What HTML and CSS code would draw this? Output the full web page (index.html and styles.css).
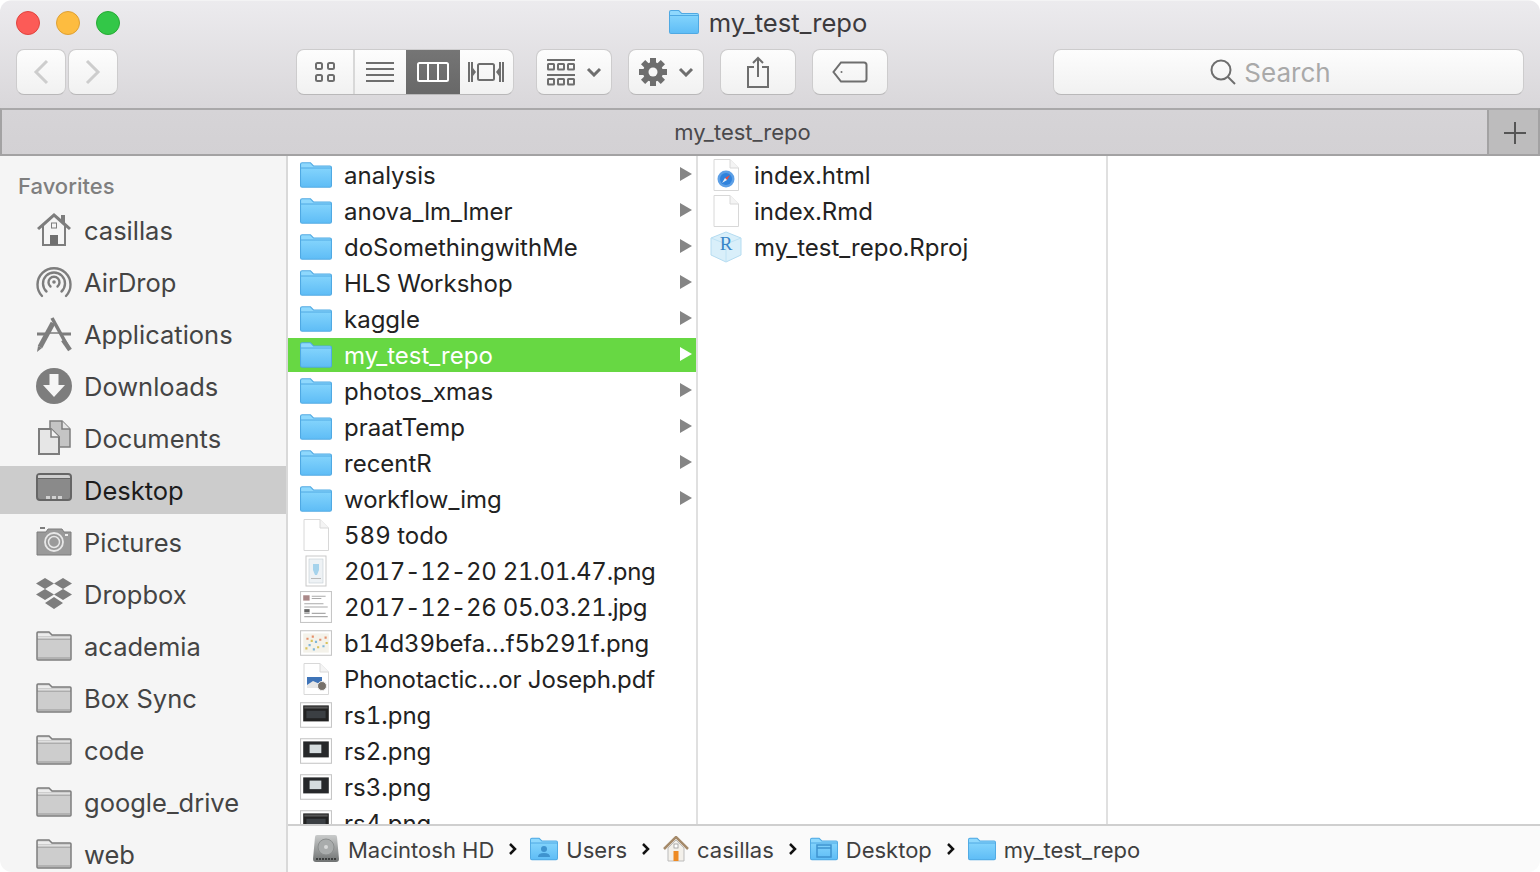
FILE: index.html
```html
<!DOCTYPE html>
<html lang="en">
<head>
	<meta charset="utf-8">
	<title>my_test_repo</title>
	<link rel="stylesheet" href="styles.css">
</head>
<body>
	<svg class="sprite" xmlns="http://www.w3.org/2000/svg">
		<defs>
			<linearGradient id="blue" x1="0" y1="0" x2="0" y2="1">
				<stop offset="0" stop-color="#82d3fc"/>
				<stop offset="1" stop-color="#5fbdf6"/>
			</linearGradient>
			<linearGradient id="disk" x1="0" y1="0" x2="0" y2="1">
				<stop offset="0" stop-color="#c9cbcb"/>
				<stop offset="1" stop-color="#6f7272"/>
			</linearGradient>
		</defs>
		<symbol id="i-folder" viewBox="0 0 30 24">
			<path d="M0 2Q0 0 2 0H10L13 3H28Q30 3 30 5V22Q30 24 28 24H2Q0 24 0 22Z" fill="#4fa9e3"/>
			<path d="M1 6H29V22Q29 23 28 23H2Q1 23 1 22Z" fill="url(#blue)"/>
			<path d="M1 5V2Q1 1 2 1H9.500L12.500 4H28Q29 4 29 5Z" fill="#8ed8fd"/>
		</symbol>
		<symbol id="i-page" viewBox="0 0 26 32">
			<path d="M1 .5H17L25.500 9V31.500H1Z" fill="#fff" stroke="#d8d8d8"/>
			<path d="M17 .5V9H25.500" fill="#f4f4f4" stroke="#d8d8d8"/>
		</symbol>
		<symbol id="i-safari" viewBox="0 0 26 32">
			<use href="#i-page" width="26" height="32"/>
			<circle cx="13" cy="20" r="8.500" fill="#5c9fe6"/>
			<circle cx="13" cy="20" r="6" fill="#2f82dc"/>
			<path d="M17 16L14 21L12 19Z" fill="#ef4b3f"/>
			<path d="M9 24L12 19L14 21Z" fill="#e8eef5"/>
		</symbol>
		<symbol id="i-shot-tall" viewBox="0 0 30 32">
			<rect x="5" y="1" width="20" height="30" fill="#fff" stroke="#c9c9c9"/>
			<rect x="8" y="4" width="14" height="24" fill="#eef2f5" stroke="#c4ccd2" stroke-width=".600"/>
			<path d="M12 9H18V15L16 20H14L12 15Z" fill="#a6d3ec"/>
			<path d="M10 23H20V24H10Z" fill="#b9b9b9"/>
		</symbol>
		<symbol id="i-shot-doc" viewBox="0 0 30 30">
			<rect x=".5" y=".5" width="29" height="29" fill="#fff" stroke="#c6c6c6"/>
			<path d="M3 4H9V9H3Z" fill="#a88"/>
			<path d="M11 5H24M11 7H20M4 12H22M4 15H26M4 21H9M11 21H24M4 24H26" stroke="#aaa"/>
			<path d="M4 17H9V20H4Z" fill="#666"/>
		</symbol>
		<symbol id="i-shot-map" viewBox="0 0 30 24">
			<rect x=".5" y=".5" width="29" height="23" fill="#fff" stroke="#c6c6c6"/>
			<rect x="3" y="3" width="24" height="18" fill="#f4f2ea"/>
			<path d="M6 7h2v2H6zM11 5h2v2h-2zM18 8h2v2h-2zM23 6h2v2h-2z" fill="#e58f6a"/>
			<path d="M8 13h2v2H8zM14 10h2v2h-2zM21 14h2v2h-2zM12 17h2v2h-2z" fill="#7fb7d9"/>
			<path d="M5 16h2v2H5zM16 15h2v2h-2zM24 11h2v2h-2zM10 9h2v2h-2z" fill="#d9c35c"/>
		</symbol>
		<symbol id="i-shot-pdf" viewBox="0 0 26 32">
			<use href="#i-page" width="26" height="32"/>
			<rect x="4" y="14" width="15" height="11" fill="#3f74b8"/>
			<path d="M4 22L10 18L19 22V25H4Z" fill="#e6e6e6"/>
			<circle cx="19" cy="23" r="4.500" fill="#77716a" stroke="#eee"/>
		</symbol>
		<symbol id="i-shot-dark" viewBox="0 0 30 24">
			<rect x=".5" y=".5" width="29" height="23" fill="#fff" stroke="#c6c6c6"/>
			<rect x="3" y="3" width="24" height="15" fill="#222"/>
			<rect x="4" y="4" width="22" height="2" fill="#555"/>
			<rect x="6" y="8" width="18" height="7" fill="#3b3f43"/>
		</symbol>
		<symbol id="i-shot-box" viewBox="0 0 30 24">
			<rect x=".5" y=".5" width="29" height="23" fill="#fff" stroke="#c6c6c6"/>
			<rect x="3" y="3" width="24" height="15" fill="#26282a"/>
			<rect x="9" y="6" width="11" height="8" fill="#d5dcde"/>
		</symbol>

		<symbol id="s-home" viewBox="0 0 36 36">
			<path d="M18 1L1 16L3 18L6 15.500V34H30V15.500L33 18L35 16L29 10.500V3H25V7Z" fill="#7d7d7d"/>
			<path d="M18 5L8 14V32H28V14Z" fill="#f5f5f5"/>
			<rect x="15.500" y="11" width="5" height="5" fill="none" stroke="#7d7d7d"/>
			<rect x="14" y="23" width="8" height="10" fill="#6f6f6f"/>
		</symbol>
		<symbol id="s-airdrop" viewBox="0 0 36 36">
			<g fill="none" stroke="#7d7d7d" stroke-width="2.400" stroke-linecap="round">
				<path d="M6 32A16.500 16.500 0 1 1 30 32"/>
				<path d="M10.500 27.500A11 11 0 1 1 25.500 27.500"/>
				<path d="M14.500 22.500A5.500 5.500 0 1 1 21.500 22.500"/>
			</g>
			<circle cx="18" cy="18" r="1.800" fill="#7d7d7d"/>
		</symbol>
		<symbol id="s-apps" viewBox="0 0 36 36">
			<g fill="none" stroke="#7d7d7d">
				<path d="M16 2L32 31" stroke-width="3.500"/>
				<path d="M1 18H9M25 18H35" stroke-width="3"/>
				<path d="M11 17H24" stroke-width="1.500"/>
				<path d="M17 7L4 31" stroke-width="5"/>
				<path d="M27 24L34 34" stroke-width="4.500"/>
			</g>
			<path d="M1 36L2 30L6 32Z" fill="#7d7d7d"/>
		</symbol>
		<symbol id="s-downloads" viewBox="0 0 36 36">
			<circle cx="18" cy="18" r="18" fill="#7d7d7d"/>
			<path d="M13.500 6H22.500V17H29L18 29L7 17H13.500Z" fill="#f5f5f5"/>
		</symbol>
		<symbol id="s-docs" viewBox="0 0 36 36">
			<path d="M14 1H26L34 9V27H14Z" fill="#c4c4c4" stroke="#7d7d7d" stroke-width="1.500"/>
			<path d="M26 1V9H34" fill="#e6e6e6" stroke="#7d7d7d" stroke-width="1.500"/>
			<path d="M3 9H15L23 17V34H3Z" fill="#e6e6e6" stroke="#7d7d7d" stroke-width="2"/>
			<path d="M15 9V17H23" fill="#f2f2f2" stroke="#7d7d7d" stroke-width="1.500"/>
		</symbol>
		<symbol id="s-desktop" viewBox="0 0 36 36">
			<rect x="1" y="2" width="34" height="26" rx="3" fill="#8a8a8a" stroke="#666" stroke-width="2"/>
			<path d="M2 3.500Q2 3 4 3H32Q34 3 34 5V6H2Z" fill="#cfcfcf"/>
			<path d="M2 6H34V7H2Z" fill="#666"/>
			<path d="M10 24h4v3h-4zM16 24h4v3h-4zM22 24h4v3h-4z" fill="#d0d0d0"/>
		</symbol>
		<symbol id="s-pictures" viewBox="0 0 36 36">
			<path d="M1 8H10L12 5H26L28 8H35V31H1Z" fill="#9a9a9a" stroke="#7d7d7d"/>
			<path d="M4 3H9V5H4Z" fill="#7d7d7d"/>
			<circle cx="18" cy="18" r="9" fill="none" stroke="#e8e8e8" stroke-width="1.800"/>
			<circle cx="18" cy="18" r="5.500" fill="none" stroke="#e8e8e8" stroke-width="1.500"/>
			<rect x="29" y="10" width="3" height="2" fill="#eee"/>
		</symbol>
		<symbol id="s-dropbox" viewBox="0 0 36 36">
			<path d="M9 2L18 7.500L9 13L0 7.500Z M27 2L36 7.500L27 13L18 7.500Z M9 13L18 18.500L9 24L0 18.500Z M27 13L36 18.500L27 24L18 18.500Z M18 21L27 27L18 33L9 27Z" fill="#7d7d7d"/>
		</symbol>
		<symbol id="s-folder" viewBox="0 0 36 30">
			<path d="M1 2Q1 1 2 1H13L16 4H34Q35 4 35 5V28Q35 29 34 29H2Q1 29 1 28Z" fill="#cdcdcd" stroke="#7d7d7d" stroke-width="1.500"/>
			<path d="M1.500 8H34.500" stroke="#7d7d7d" stroke-width="1.500"/>
			<path d="M2 5V2.500H13L15.500 5Z" fill="#ececec"/>
			<path d="M2 8.500H34V6H2Z" fill="#ececec" opacity=".6"/>
			<path d="M2 26H34V28H2Z" fill="#b2b2b2"/>
		</symbol>
	</svg>

	<div class="window">
		<header class="toolbar">
			<div class="titlebar">
				<div class="lights">
					<span class="light red"></span>
					<span class="light amber"></span>
					<span class="light green"></span>
				</div>
				<div class="title">
					<svg class="title-icon"><use href="#i-folder"/></svg>
					<span>my_test_repo</span>
				</div>
			</div>
			<div class="tools">
				<div class="nav">
					<div class="btn nav-btn">
						<svg width="18" height="26" viewBox="0 0 18 26"><path d="M15 2L4 13L15 24" class="chev-line"/></svg>
					</div>
					<div class="btn nav-btn">
						<svg width="18" height="26" viewBox="0 0 18 26"><path d="M3 2L14 13L3 24" class="chev-line"/></svg>
					</div>
				</div>

				<div class="btn views">
					<div class="view">
						<svg width="22" height="22" viewBox="0 0 22 22" class="ic"><rect x="2" y="2" width="6" height="6" rx="1.500"/><rect x="14" y="2" width="6" height="6" rx="1.500"/><rect x="2" y="14" width="6" height="6" rx="1.500"/><rect x="14" y="14" width="6" height="6" rx="1.500"/></svg>
					</div>
					<div class="view view-mid">
						<svg width="30" height="22" viewBox="0 0 30 22" class="ic"><path d="M1 2H29M1 8H29M1 14H29M1 20H29"/></svg>
					</div>
					<div class="view view-on">
						<svg width="32" height="20" viewBox="0 0 32 20" class="ic-on"><rect x="1" y="1" width="30" height="18" rx="1.500"/><path d="M11 1V19M21 1V19"/></svg>
					</div>
					<div class="view view-end">
						<svg width="36" height="22" viewBox="0 0 36 22" class="ic"><path d="M1 1V21M4 1V21M32 1V21M35 1V21"/><rect x="10" y="3" width="16" height="16" rx="1.500"/><path d="M5 7L8 11L5 15ZM31 7L28 11L31 15Z" class="ic-fill"/></svg>
					</div>
				</div>

				<div class="btn tool">
					<svg width="28" height="28" viewBox="0 0 28 28" class="ic"><path d="M0 2H28M0 17H28"/><rect x="1" y="6" width="6" height="5.500" rx=".5"/><rect x="11" y="6" width="6" height="5.500" rx=".5"/><rect x="21" y="6" width="6" height="5.500" rx=".5"/><rect x="1" y="21" width="6" height="5.500" rx=".5"/><rect x="11" y="21" width="6" height="5.500" rx=".5"/><rect x="21" y="21" width="6" height="5.500" rx=".5"/></svg>
					<svg width="16" height="10" viewBox="0 0 16 10" class="ic-chev"><path d="M2 2L8 8L14 2"/></svg>
				</div>
				<div class="btn tool">
					<svg width="28" height="28" viewBox="0 0 28 28" class="gear">
						<circle cx="14" cy="14" r="10"/>
						<rect x="11" y="0" width="6" height="28"/>
						<rect x="11" y="0" width="6" height="28" transform="rotate(45 14 14)"/>
						<rect x="11" y="0" width="6" height="28" transform="rotate(90 14 14)"/>
						<rect x="11" y="0" width="6" height="28" transform="rotate(135 14 14)"/>
						<circle cx="14" cy="14" r="4.500" class="gear-hole"/>
					</svg>
					<svg width="16" height="10" viewBox="0 0 16 10" class="ic-chev"><path d="M2 2L8 8L14 2"/></svg>
				</div>
				<div class="btn tool">
					<svg width="24" height="32" viewBox="0 0 24 32" class="ic"><path d="M8 11H2V31H22V11H16M12 21V2M7 7L12 2L17 7"/></svg>
				</div>
				<div class="btn tool">
					<svg width="36" height="22" viewBox="0 0 36 22" class="ic"><path d="M9 1.500H32Q34.500 1.500 34.500 4V18Q34.500 20.500 32 20.500H9L1.500 11Z"/><circle cx="9.500" cy="11" r="1" class="ic-fill"/></svg>
				</div>

				<div class="btn search">
					<svg width="26" height="26" viewBox="0 0 26 26" class="ic"><circle cx="11" cy="11" r="9.500"/><path d="M18 18L25 25"/></svg>
					<span>Search</span>
				</div>
			</div>
		</header>

		<div class="tabbar">
			<div class="tab-name">my_test_repo</div>
			<div class="tab-add">
				<svg width="22" height="22" viewBox="0 0 22 22"><path d="M11 0V22M0 11H22"/></svg>
			</div>
		</div>

		<div class="main">
			<aside class="sidebar">
				<div class="side-head">Favorites</div>
				<div class="side-row"><svg class="side-icon"><use href="#s-home"/></svg>casillas</div>
				<div class="side-row"><svg class="side-icon"><use href="#s-airdrop"/></svg>AirDrop</div>
				<div class="side-row"><svg class="side-icon"><use href="#s-apps"/></svg>Applications</div>
				<div class="side-row"><svg class="side-icon"><use href="#s-downloads"/></svg>Downloads</div>
				<div class="side-row"><svg class="side-icon"><use href="#s-docs"/></svg>Documents</div>
				<div class="side-row side-on"><svg class="side-icon"><use href="#s-desktop"/></svg>Desktop</div>
				<div class="side-row"><svg class="side-icon"><use href="#s-pictures"/></svg>Pictures</div>
				<div class="side-row"><svg class="side-icon"><use href="#s-dropbox"/></svg>Dropbox</div>
				<div class="side-row"><svg class="side-icon"><use href="#s-folder"/></svg>academia</div>
				<div class="side-row"><svg class="side-icon"><use href="#s-folder"/></svg>Box Sync</div>
				<div class="side-row"><svg class="side-icon"><use href="#s-folder"/></svg>code</div>
				<div class="side-row"><svg class="side-icon"><use href="#s-folder"/></svg>google_drive</div>
				<div class="side-row"><svg class="side-icon"><use href="#s-folder"/></svg>web</div>
			</aside>

			<div class="browser">
				<div class="columns">
					<div class="col">
						<div class="row"><svg class="file folder"><use href="#i-folder"/></svg><span class="name">analysis</span><i class="arrow"></i></div>
						<div class="row"><svg class="file folder"><use href="#i-folder"/></svg><span class="name">anova_lm_lmer</span><i class="arrow"></i></div>
						<div class="row"><svg class="file folder"><use href="#i-folder"/></svg><span class="name">doSomethingwithMe</span><i class="arrow"></i></div>
						<div class="row"><svg class="file folder"><use href="#i-folder"/></svg><span class="name">HLS Workshop</span><i class="arrow"></i></div>
						<div class="row"><svg class="file folder"><use href="#i-folder"/></svg><span class="name">kaggle</span><i class="arrow"></i></div>
						<div class="row row-on"><svg class="file folder"><use href="#i-folder"/></svg><span class="name">my_test_repo</span><i class="arrow"></i></div>
						<div class="row"><svg class="file folder"><use href="#i-folder"/></svg><span class="name">photos_xmas</span><i class="arrow"></i></div>
						<div class="row"><svg class="file folder"><use href="#i-folder"/></svg><span class="name">praatTemp</span><i class="arrow"></i></div>
						<div class="row"><svg class="file folder"><use href="#i-folder"/></svg><span class="name">recentR</span><i class="arrow"></i></div>
						<div class="row"><svg class="file folder"><use href="#i-folder"/></svg><span class="name">workflow_img</span><i class="arrow"></i></div>
						<div class="row"><svg class="file"><use href="#i-page"/></svg><span class="name">589 todo</span></div>
						<div class="row"><svg class="file"><use href="#i-shot-tall"/></svg><span class="name num">2017-12-20 21.01.47.png</span></div>
						<div class="row"><svg class="file"><use href="#i-shot-doc"/></svg><span class="name num">2017-12-26 05.03.21.jpg</span></div>
						<div class="row"><svg class="file"><use href="#i-shot-map"/></svg><span class="name tight">b14d39befa…f5b291f.png</span></div>
						<div class="row"><svg class="file"><use href="#i-shot-pdf"/></svg><span class="name tight">Phonotactic…or Joseph.pdf</span></div>
						<div class="row"><svg class="file"><use href="#i-shot-dark"/></svg><span class="name">rs1.png</span></div>
						<div class="row"><svg class="file"><use href="#i-shot-box"/></svg><span class="name">rs2.png</span></div>
						<div class="row"><svg class="file"><use href="#i-shot-box"/></svg><span class="name">rs3.png</span></div>
						<div class="row"><svg class="file"><use href="#i-shot-dark"/></svg><span class="name">rs4.png</span></div>
					</div>
					<div class="col">
						<div class="row"><svg class="file"><use href="#i-safari"/></svg><span class="name">index.html</span></div>
						<div class="row"><svg class="file"><use href="#i-page"/></svg><span class="name">index.Rmd</span></div>
						<div class="row">
							<svg class="file" viewBox="0 0 32 30">
								<path d="M16 0L31 6V23L16 30L1 23V6Z" fill="#d9effa" stroke="#b5dcf1"/>
								<path d="M1 6L16 12L31 6M16 12V30" fill="none" stroke="#bfe2f4"/>
								<text x="16" y="18" class="r-letter">R</text>
							</svg>
							<span class="name">my_test_repo.Rproj</span>
						</div>
					</div>
					<div class="col col-last"></div>
				</div>

				<div class="pathbar">
					<svg class="crumb-icon" width="28" height="28" viewBox="0 0 28 28">
						<path d="M3 2Q3 0 5 0H23Q25 0 25 2L27 24Q27 27 24 27H4Q1 27 1 24Z" fill="url(#disk)"/>
						<circle cx="14" cy="12" r="8" fill="#a9acac" stroke="#8b8e8e"/>
						<circle cx="14" cy="12" r="2" fill="#d7d9d9"/>
						<path d="M4 24H24" stroke="#3c3e3e" stroke-width="2" stroke-dasharray="2 1"/>
					</svg>
					<span class="crumb">Macintosh HD</span>
					<svg class="crumb-sep" width="10" height="14" viewBox="0 0 10 14"><path d="M2 2L7 7L2 12"/></svg>
					<svg class="crumb-icon" width="28" height="24" viewBox="0 0 28 24">
						<use href="#i-folder" width="28" height="24"/>
						<circle cx="14" cy="12" r="3" fill="#3e93cf"/>
						<path d="M8 20Q8 16 14 16Q20 16 20 20Z" fill="#3e93cf"/>
					</svg>
					<span class="crumb">Users</span>
					<svg class="crumb-sep" width="10" height="14" viewBox="0 0 10 14"><path d="M2 2L7 7L2 12"/></svg>
					<svg class="crumb-icon crumb-home" width="26" height="26" viewBox="0 0 26 26">
						<path d="M5 12L13 4L21 12V25H5Z" fill="#f3f0ea" stroke="#bbb"/>
						<path d="M1 13L13 1L25 13" fill="none" stroke="#a58a6a" stroke-width="2.500"/>
						<rect x="10.500" y="15" width="5" height="10" fill="#ee8a22"/>
						<rect x="11" y="8" width="4" height="4" fill="#fff" stroke="#999" stroke-width=".800"/>
					</svg>
					<span class="crumb">casillas</span>
					<svg class="crumb-sep" width="10" height="14" viewBox="0 0 10 14"><path d="M2 2L7 7L2 12"/></svg>
					<svg class="crumb-icon" width="28" height="24" viewBox="0 0 28 24">
						<use href="#i-folder" width="28" height="24"/>
						<rect x="7" y="8" width="14" height="12" fill="none" stroke="#3e93cf" stroke-width="1.500"/>
						<path d="M7 11H21" stroke="#3e93cf" stroke-width="1.500"/>
					</svg>
					<span class="crumb">Desktop</span>
					<svg class="crumb-sep" width="10" height="14" viewBox="0 0 10 14"><path d="M2 2L7 7L2 12"/></svg>
					<svg class="crumb-icon" width="28" height="24"><use href="#i-folder"/></svg>
					<span class="crumb">my_test_repo</span>
				</div>
			</div>
		</div>
	</div>
</body>
</html>
```

FILE: styles.css
```css
* {padding: 0; margin: 0; box-sizing: border-box;}
html, body {
	width: 1540px;
	height: 872px;
	overflow: hidden;
	background: #fff;
}
body {
	font-family: "Inter", "Liberation Sans", sans-serif;
	font-size: 24px;
	color: #222;
}
.sprite {
	position: absolute;
	width: 0;
	height: 0;
}
.r-letter {
	font-family: "Liberation Serif", serif;
	font-size: 19px;
	fill: #3a86c8;
	text-anchor: middle;
}

.window {
	width: 1540px;
	height: 872px;
	display: flex;
	flex-direction: column;
	border-radius: 12px;
	overflow: hidden;
}

/* toolbar */
.toolbar {
	height: 108px;
	flex: none;
	background: linear-gradient(#ecebee, #d9d7da);
	border-top: 1px solid #f3f3f4;
}
.titlebar {
	height: 44px;
	display: grid;
	grid-template-columns: 1fr auto 1fr;
	align-items: center;
	padding: 0 16px;
}
.lights {
	display: flex;
	gap: 16px;
}
.light {
	width: 24px;
	height: 24px;
	border-radius: 50%;
	border: 1px solid;
}
.red {background: #fc5b57; border-color: #e0443e;}
.amber {background: #fdbc40; border-color: #dea034;}
.green {background: #33c748; border-color: #27aa35;}
.title {
	grid-column: 2;
	display: flex;
	align-items: center;
	gap: 10px;
	color: #3c3a3d;
	font-size: 25.6px;
	margin: 0 4px 2px 0;
}
.title-icon {
	width: 30px;
	height: 24px;
}
.tools {
	height: 46px;
	margin-top: 4px;
	padding: 0 16px;
	display: flex;
	gap: 16px;
}
.btn {
	height: 46px;
	display: flex;
	align-items: center;
	justify-content: center;
	background: linear-gradient(#fdfdfd, #f1f1f1);
	border: 1px solid #cdcccd;
	border-bottom-color: #b9b8b9;
	border-radius: 8px;
}
.nav {
	display: flex;
	gap: 2px;
	margin-right: 162px;
}
.nav-btn {
	width: 50px;
}
.chev-line {
	fill: none;
	stroke: #cdcdcd;
	stroke-width: 3;
}
.views {
	width: 218px;
	margin-right: 6px;
	display: grid;
	grid-template-columns: 56px 53px 54px 1fr;
	overflow: hidden;
}
.view {
	height: 100%;
	display: flex;
	align-items: center;
	justify-content: center;
}
.view-mid {
	border-left: 2px solid #d8d8d8;
	padding-right: 2px;
}
.view-end {
	padding-right: 2px;
}
.view-on {
	background: linear-gradient(#757575, #686868);
}
.ic, .ic-chev {
	fill: none;
	stroke: #6e6e6e;
	stroke-width: 2;
}
.ic-chev {
	stroke-width: 3;
}
.ic-fill {
	fill: #6e6e6e;
	stroke: none;
}
.ic-on {
	fill: none;
	stroke: #fff;
	stroke-width: 2;
}
.tool {
	width: 76px;
	gap: 11px;
}
.gear {
	fill: #6e6e6e;
}
.gear-hole {
	fill: #f7f7f7;
}
.search {
	width: 471px;
	margin-left: auto;
	padding-right: 36px;
	gap: 8px;
	color: #a9a9a9;
	font-size: 26px;
}

/* tab row */
.tabbar {
	height: 48px;
	flex: none;
	display: flex;
	background: linear-gradient(#d6d4d7, #d3d1d4);
	border-top: 2px solid #a9a8a9;
	border-bottom: 2px solid #a3a2a3;
	border-left: 2px solid #a3a2a3;
	border-right: 2px solid #a3a2a3;
}
.tab-name {
	flex: 1;
	display: flex;
	align-items: center;
	justify-content: center;
	padding-right: 4px;
	font-size: 22px;
	color: #4a494b;
}
.tab-add {
	width: 51px;
	display: flex;
	align-items: center;
	justify-content: center;
	padding: 2px 0 0 2px;
	background: #bdbcbd;
	border-left: 2px solid #a3a2a3;
}
.tab-add path {
	stroke: #555;
	stroke-width: 2;
}

/* body */
.main {
	flex: 1;
	min-height: 0;
	display: flex;
}
.sidebar {
	width: 288px;
	flex: none;
	background: #f5f5f5;
	border-right: 2px solid #d9d9d9;
	overflow: hidden;
	color: #444;
	font-size: 25.5px;
}
.side-head {
	height: 50px;
	padding: 17px 0 0 18px;
	font-size: 22px;
	font-weight: 500;
	line-height: 26px;
	color: #7f7f7f;
}
.side-row {
	height: 48px;
	margin-bottom: 4px;
	padding-left: 36px;
	display: flex;
	align-items: center;
	gap: 12px;
}
.side-on {
	background: #cccccc;
	color: #1c1c1c;
}
.side-icon {
	width: 36px;
	height: 36px;
	flex: none;
}

.browser {
	flex: 1;
	min-width: 0;
	display: flex;
	flex-direction: column;
}
.columns {
	flex: 1;
	min-height: 0;
	display: flex;
}
.col {
	width: 410px;
	flex: none;
	padding-top: 2px;
	border-right: 2px solid #e0e0e0;
	overflow: hidden;
}
.col-last {
	flex: 1;
	border-right: 0;
}
.row {
	height: 34px;
	margin-bottom: 2px;
	display: flex;
	align-items: center;
	padding: 0 4px 0 12px;
}
.row-on {
	background: #67d843;
	color: #fff;
}
.file {
	width: 32px;
	height: 32px;
	flex: none;
}
.name {
	flex: 1;
	margin-left: 12px;
	white-space: nowrap;
	font-variant-numeric: tabular-nums;
}
.num {
	letter-spacing: -.3px;
}
.tight {
	letter-spacing: -.12px;
}
.arrow {
	width: 0;
	height: 0;
	border-left: 12px solid #858585;
	border-top: 7px solid transparent;
	border-bottom: 7px solid transparent;
	transform: translateY(-1px);
}
.row-on .arrow {
	border-left-color: #fff;
}

.pathbar {
	height: 48px;
	flex: none;
	display: flex;
	align-items: center;
	padding-left: 24px;
	background: #fafafa;
	border-top: 2px solid #cfcfcf;
	font-size: 22px;
	color: #3f3f3f;
}
.crumb {
	margin-top: 2px;
}
.crumb-icon {
	flex: none;
	margin-right: 8px;
}
.crumb-sep {
	flex: none;
	margin: 0 12px 0 14px;
}
.crumb-sep path {
	fill: none;
	stroke: #111;
	stroke-width: 2.500;
}
```
